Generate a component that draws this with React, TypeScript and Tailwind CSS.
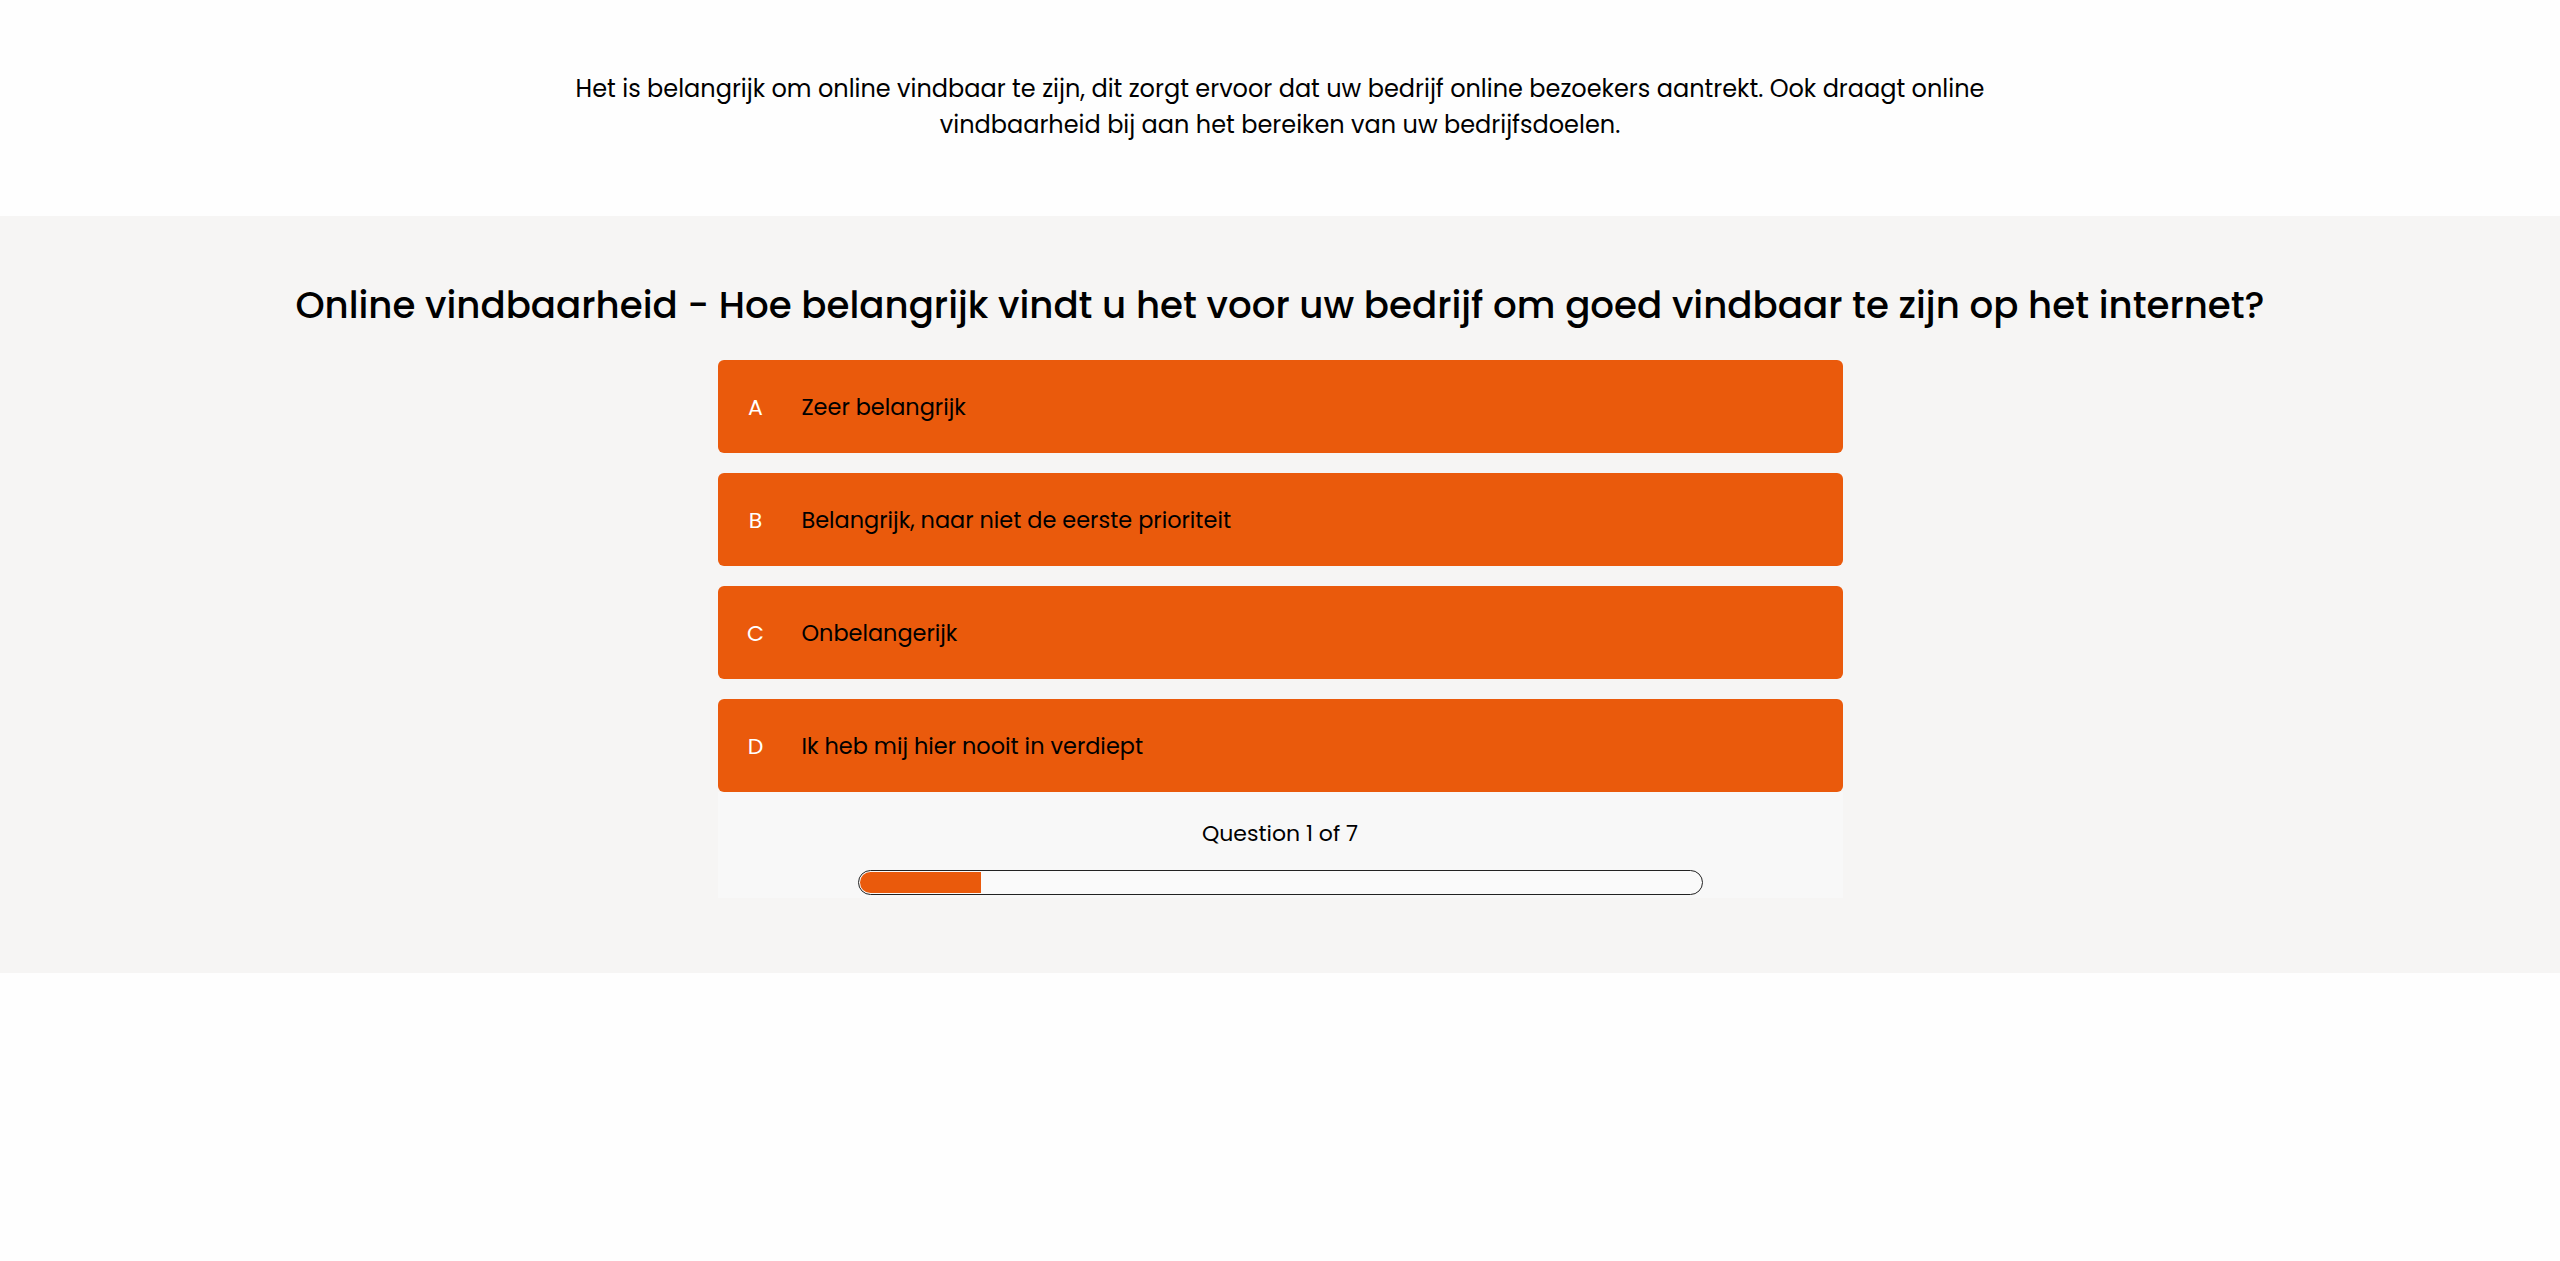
import React from "react";

const options = [
  { letter: "A", text: "Zeer belangrijk" },
  { letter: "B", text: "Belangrijk, naar niet de eerste prioriteit" },
  { letter: "C", text: "Onbelangerijk" },
  { letter: "D", text: "Ik heb mij hier nooit in verdiept" },
];

export default function App() {
  return (
    <div className="min-h-[1261px] bg-[#fefefe] text-black" style={{ fontFamily: "Poppins, Inter, 'Noto Sans', sans-serif" }}>
      <section className="h-[216px] flex justify-center pt-[71px]">
        <p className="text-center text-[24px] leading-[36px] text-black">
          Het is belangrijk om online vindbaar te zijn, dit zorgt ervoor dat uw bedrijf online bezoekers aantrekt. Ook draagt online
          <br />
          vindbaarheid bij aan het bereiken van uw bedrijfsdoelen.
        </p>
      </section>
      <section className="h-[757px] bg-[#f6f5f4] flex flex-col items-center pt-[66px]">
        <h2 className="text-[37.2px] leading-[46px] font-medium text-black text-center whitespace-nowrap">
          Online vindbaarheid - Hoe belangrijk vindt u het voor uw bedrijf om goed vindbaar te zijn op het internet?
        </h2>
        <div className="mt-[32px] w-[1125px] flex flex-col gap-[20px]">
          {options.map((o) => (
            <div key={o.letter} className="h-[93px] rounded-[6px] bg-[#ea5a0c] flex items-center pl-[13px] pt-[2px]">
              <span className="w-[50px] text-center text-white text-[22px]">{o.letter}</span>
              <span className="ml-[21px] text-[22.4px] text-black">{o.text}</span>
            </div>
          ))}
        </div>
        <div className="w-[1125px] h-[106px] bg-[#f8f8f8] flex flex-col items-center">
          <div className="mt-[28px] text-center text-[22px] leading-[28px] text-black">Question 1 of 7</div>
          <div className="mt-[22px] w-[845px] h-[25px] rounded-full border border-[#222] bg-[#fafafa] p-[1px] flex">
            <div className="h-full w-[121px] bg-[#ea5a0c] rounded-l-full" />
          </div>
        </div>
      </section>
    </div>
  );
}
